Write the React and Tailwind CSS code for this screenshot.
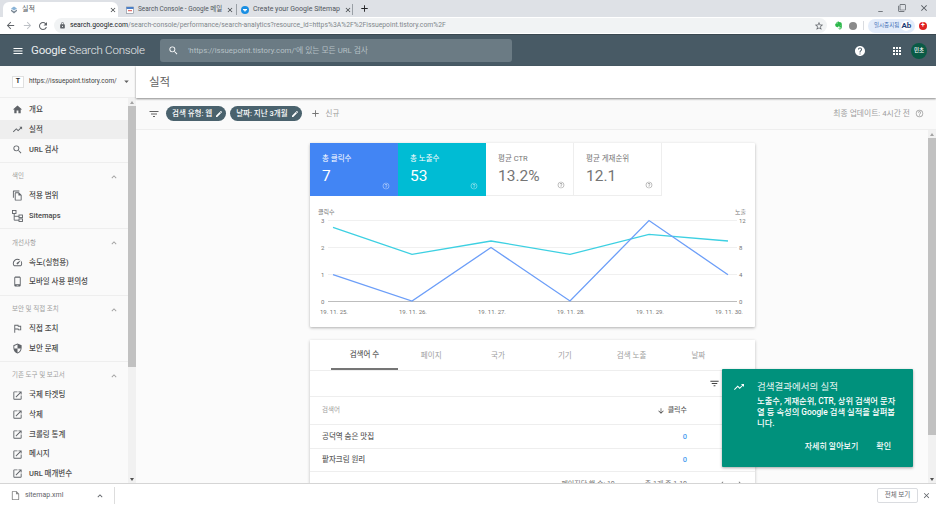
import {
  MdHome, MdTrendingUp, MdSearch, MdOutlineFileCopy, MdOutlineSpeed, MdOutlinePhoneAndroid,
  MdOutlineFlag, MdSecurity, MdOpenInNew, MdFilterList, MdEdit, MdAdd, MdHelpOutline, MdHelp,
  MdApps, MdMenu, MdArrowDownward, MdExpandLess, MdStarBorder, MdOutlineInsertDriveFile,
  MdClose, MdArrowBack, MdArrowForward, MdRefresh, MdLock, MdArrowDropDown,
  MdChevronLeft, MdChevronRight, MdMinimize, MdFilterNone,
} from 'react-icons/md';
import { FaEvernote } from 'react-icons/fa';

const font = { fontFamily: 'Roboto, "Noto Sans CJK KR", sans-serif' };

function SitemapIcon() {
  return (
    <svg width="11" height="12" viewBox="0 0 11 12" fill="none" stroke="#5f6368" strokeWidth="0.9">
      <rect x="0.5" y="0.5" width="3.5" height="3" />
      <rect x="7" y="5" width="3.5" height="2.6" />
      <rect x="7" y="8.9" width="3.5" height="2.6" />
      <path d="M2.2 3.5V10.2H7M2.2 6.3H7" />
    </svg>
  );
}

function ConsoleFavicon() {
  return (
    <svg className="shrink-0" width="8" height="8" viewBox="0 0 8 8">
      <path d="M1 2.5 4 0.5 7 2.5 4 4.5Z" fill="#8ab4d8" />
      <path d="M1 3.5 4 5.5 7 3.5V5L4 7.5 1 5Z" fill="#7a8794" />
    </svg>
  );
}

function MailFavicon() {
  return (
    <svg className="shrink-0" width="8" height="8" viewBox="0 0 8 8">
      <rect x="0.5" y="1" width="7" height="6.5" fill="#ffffff" stroke="#7a8794" strokeWidth="0.6" />
      <rect x="0.5" y="1" width="7" height="2" fill="#4a7fc9" />
      <rect x="2" y="4.2" width="4" height="1" fill="#d9534f" />
    </svg>
  );
}

function GlobeFavicon() {
  return (
    <svg className="shrink-0" width="8" height="8" viewBox="0 0 8 8">
      <circle cx="4" cy="4" r="4" fill="#1a8fe3" />
      <path d="M2 3h4v1.2H5L4 6 3 4.2H2Z" fill="#ffffff" />
    </svg>
  );
}

const sections = [
  {
    items: [
      { icon: <MdHome />, label: '개요' },
      { icon: <MdTrendingUp />, label: '실적', active: true },
      { icon: <MdSearch />, label: 'URL 검사' },
    ],
  },
  {
    title: '색인',
    items: [
      { icon: <MdOutlineFileCopy />, label: '적용 범위' },
      { icon: <SitemapIcon />, label: 'Sitemaps' },
    ],
  },
  {
    title: '개선사항',
    items: [
      { icon: <MdOutlineSpeed />, label: '속도(실험용)' },
      { icon: <MdOutlinePhoneAndroid />, label: '모바일 사용 편의성' },
    ],
  },
  {
    title: '보안 및 직접 조치',
    items: [
      { icon: <MdOutlineFlag />, label: '직접 조치' },
      { icon: <MdSecurity />, label: '보안 문제' },
    ],
  },
  {
    title: '기존 도구 및 보고서',
    items: [
      { icon: <MdOpenInNew />, label: '국제 타겟팅' },
      { icon: <MdOpenInNew />, label: '삭제' },
      { icon: <MdOpenInNew />, label: '크롤링 통계' },
      { icon: <MdOpenInNew />, label: '메시지' },
      { icon: <MdOpenInNew />, label: 'URL 매개변수' },
    ],
  },
];

const tiles = [
  { label: '총 클릭수', value: '7', tile: 'bg-[#4285f4] text-white', help: 'text-white/60' },
  { label: '총 노출수', value: '53', tile: 'bg-[#00bcd4] text-white', help: 'text-white/60' },
  { label: '평균 CTR', value: '13.2%', tile: 'bg-white text-[#757575] border-r border-b border-[#eeeeee]', help: 'text-[#9e9e9e]' },
  { label: '평균 게재순위', value: '12.1', tile: 'bg-white text-[#757575] border-r border-b border-[#eeeeee]', help: 'text-[#9e9e9e]' },
];

const tableTabs = ['검색어 수', '페이지', '국가', '기기', '검색 노출', '날짜'];
const rows = ['공덕역 숨은 맛집', '팥자크림 원리'];

function ScrollBar({ thumb }) {
  return (
    <div className="w-2 shrink-0 flex flex-col bg-[#f1f1f1]">
      <div className="h-2 flex items-center justify-center">
        <div className="border-x-[2px] border-b-[3px] border-x-transparent border-b-[#a3a3a3]" />
      </div>
      <div className={`${thumb} bg-[#c1c1c1]`} />
      <div className="flex-1" />
      <div className="h-2 flex items-center justify-center">
        <div className="border-x-[2px] border-t-[3px] border-x-transparent border-t-[#505050]" />
      </div>
    </div>
  );
}

function Sidebar() {
  return (
    <aside className="w-[136px] shrink-0 flex flex-col bg-[#fafafa] overflow-hidden">
      <div className="h-[32px] shrink-0 flex items-center pl-3 pr-[4px] border-b border-[#eeeeee] bg-[#fafafa]">
        <div className="w-3 h-3 bg-white border border-[#e0e0e0] flex items-center justify-center text-[7px] font-bold text-[#333]">
          T
        </div>
        <span className="ml-[5px] text-[6.5px] text-[#424242]">https://issuepoint.tistory.com/</span>
        <MdArrowDropDown className="ml-auto text-[11px] text-[#616161]" />
      </div>
      <div className="flex-1 flex min-h-0">
        <nav className="flex-1 min-w-0 pt-[2px]">
          {sections.map((section, i) => (
            <div key={i} className={i === 0 ? 'pb-[3px]' : 'border-t border-[#eeeeee] pt-[5px] pb-[3px]'}>
              {section.title && (
                <div className="h-[18px] flex items-center pl-3 pr-[9px] text-[6.5px] text-[#9e9e9e]">
                  <span>{section.title}</span>
                  <MdExpandLess className="ml-auto text-[10px] text-[#9e9e9e]" />
                </div>
              )}
              {section.items.map((item) => (
                <div
                  key={item.label}
                  className={`h-[19.7px] flex items-center pl-3 ${item.active ? 'bg-[#eeeeee]' : ''}`}
                >
                  <span className="w-[17px] text-[#5f6368] text-[11px] flex items-center">{item.icon}</span>
                  <span className="text-[7.5px] text-[#4a4a4a] font-medium">{item.label}</span>
                </div>
              ))}
            </div>
          ))}
        </nav>
        <ScrollBar thumb="h-[261px]" />
      </div>
    </aside>
  );
}

function Chip({ label }) {
  return (
    <div className="h-[15px] rounded-full bg-[#4a626d] text-white flex items-center pl-[6px] pr-[3px] gap-[3px]">
      <span className="text-[7.5px] font-medium whitespace-nowrap">{label}</span>
      <MdEdit className="text-[8px]" />
    </div>
  );
}

function PerformanceCard() {
  const blue = '333,274.7 412,301 491,247.5 570,301 649,220.5 728,274.7';
  const cyan = '333,227.3 412,254.3 491,241 570,254.3 649,234.3 728,241';
  return (
    <section className="w-[445px] h-[184px] bg-white rounded-[1px] shadow-[0_1px_3px_rgba(0,0,0,0.3)]">
      <div className="flex h-[53px]">
        {tiles.map((t) => (
          <div key={t.label} className={`relative w-[88px] pl-3 pt-[11px] ${t.tile}`}>
            <div className="text-[7.5px] leading-[9px]">{t.label}</div>
            <div className="text-[15.5px] leading-[20px] mt-[3px]">{t.value}</div>
            <MdHelpOutline className={`absolute right-[8px] bottom-[6px] text-[8px] ${t.help}`} />
          </div>
        ))}
      </div>
      <svg width="445" height="131" viewBox="310 196 445 131" style={font}>
        <g stroke="#f0f0f0" strokeWidth="1">
          <line x1="328" x2="737" y1="220.5" y2="220.5" />
          <line x1="328" x2="737" y1="247.5" y2="247.5" />
          <line x1="328" x2="737" y1="274.5" y2="274.5" />
        </g>
        <line x1="328" x2="737" y1="301.5" y2="301.5" stroke="#bdbdbd" />
        <polyline points={cyan} fill="none" stroke="#3dd0e2" strokeWidth="1.3" />
        <polyline points={blue} fill="none" stroke="#6c9ef8" strokeWidth="1.3" />
        <g fontSize="6" fill="#757575">
          <text x="318" y="214">클릭수</text>
          <text x="735" y="214">노출</text>
          {[['3', 222.5], ['2', 249.5], ['1', 276.5], ['0', 303.5]].map(([v, y]) => (
            <text key={v} x="321" y={y}>{v}</text>
          ))}
          {[['12', 222.5], ['8', 249.5], ['4', 276.5], ['0', 303.5]].map(([v, y]) => (
            <text key={v} x="739" y={y}>{v}</text>
          ))}
          {['19. 11. 25.', '19. 11. 26.', '19. 11. 27.', '19. 11. 28.', '19. 11. 29.', '19. 11. 30.'].map((d, i) => (
            <text key={d} x={320 + i * 79} y="314">{d}</text>
          ))}
        </g>
      </svg>
    </section>
  );
}

function TableCard() {
  return (
    <section className="w-[445px] bg-white mt-[13px] shadow-[0_1px_3px_rgba(0,0,0,0.25)]">
      <div className="h-[31px] pl-[21px] flex border-b border-[#eeeeee]">
        {tableTabs.map((tab, i) => (
          <div
            key={tab}
            className={`w-[66.8px] flex items-center justify-center pt-[1px] text-[7.5px] ${
              i === 0 ? 'border-b-[2px] border-[#757575] text-[#616161] font-medium' : 'text-[#9e9e9e]'
            }`}
          >
            {tab}
          </div>
        ))}
      </div>
      <div className="h-[26px] flex items-center justify-end pr-[35px] border-b border-[#eeeeee]">
        <MdFilterList className="text-[11px] text-[#424242]" />
      </div>
      <div className="h-[28px] flex items-center justify-between pl-3 pr-[68px] border-b border-[#eeeeee]">
        <span className="text-[6.5px] text-[#9e9e9e]">검색어</span>
        <span className="flex items-center gap-[3px] text-[7px] text-[#616161] font-medium">
          <MdArrowDownward className="text-[8px] text-[#424242]" />
          클릭수
        </span>
      </div>
      {rows.map((row) => (
        <div key={row} className="h-[23.5px] flex items-center justify-between pl-3 pr-[68px] border-b border-[#eeeeee]">
          <span className="text-[7.5px] text-[#5f5f5f] font-medium">{row}</span>
          <span className="text-[7.5px] text-[#4a9df0] font-medium">0</span>
        </div>
      ))}
      {/* pager row sits behind the download bar, only its top edge shows */}
      <div className="h-[24px] flex items-center justify-end pr-[10px] gap-[30px] text-[7px] text-[#757575]">
        <span>페이지당 행 수: 10</span>
        <span>총 1개 중 1-10</span>
        <span className="flex gap-[8px] text-[10px]">
          <MdChevronLeft />
          <MdChevronRight />
        </span>
      </div>
    </section>
  );
}

export default function App() {
  return (
    <div className="relative w-[936px] h-[507px] flex flex-col overflow-hidden bg-white" style={font}>
      {/* browser tabs */}
      <div className="h-[17px] shrink-0 bg-[#dee1e6] flex items-end pl-[3px]">
        <div className="w-[115px] h-[15px] flex items-center bg-white rounded-t-md pl-[7px] pr-[1px] gap-1 shrink-0">
          <ConsoleFavicon />
          <span className="flex-1 text-[7px] text-[#50565c]">실적</span>
          <MdClose className="text-[8px] text-[#3c4043] shrink-0" />
        </div>
        <div className="w-[119px] h-[11px] mb-[2px] flex items-center pl-2 pr-1 gap-1 border-r border-[#9aa0a6] shrink-0">
          <MailFavicon />
          <span className="flex-1 whitespace-nowrap text-[6.5px] text-[#50565c]">Search Console - Google 메일</span>
          <MdClose className="text-[8px] text-[#3c4043] shrink-0" />
        </div>
        <div className="w-[116px] h-[11px] mb-[2px] flex items-center pl-1 pr-[3px] gap-1 border-r border-[#9aa0a6] shrink-0">
          <GlobeFavicon />
          <span className="flex-1 whitespace-nowrap text-[7px] text-[#50565c]">Create your Google Sitemap</span>
          <MdClose className="text-[8px] text-[#3c4043] shrink-0" />
        </div>
        <MdAdd className="ml-[6px] mb-[3px] text-[11px] text-[#202124]" />
        <div className="ml-auto flex items-center gap-[13px] pr-[7px] self-start pt-[3px] text-[#50565c]">
          <MdMinimize className="text-[9px]" />
          <MdFilterNone className="text-[8px]" />
          <MdClose className="text-[10px]" />
        </div>
      </div>

      {/* browser toolbar */}
      <div className="h-[17px] shrink-0 bg-white flex items-center pl-[5px]">
        <MdArrowBack className="text-[11px] text-[#5f6368]" />
        <MdArrowForward className="ml-[6px] text-[11px] text-[#bdc1c6]" />
        <MdRefresh className="ml-[4px] text-[12px] text-[#5f6368]" />
        <div className="ml-[5px] w-[773px] h-[15px] rounded-full bg-[#f1f3f4] flex items-center pl-[5px] pr-[3px]">
          <MdLock className="text-[7px] text-[#5f6368]" />
          <span className="ml-[4px] text-[6.8px] whitespace-nowrap text-[#80868b]">
            <span className="text-[#202124]">search.google.com</span>
            /search-console/performance/search-analytics?resource_id=https%3A%2F%2Fissuepoint.tistory.com%2F
          </span>
          <MdStarBorder className="ml-auto text-[10px] text-[#5f6368]" />
        </div>
        <FaEvernote className="ml-[7px] text-[9px] text-[#2db84b]" />
        <div className="ml-[6px] w-[8px] h-[8px] rounded-full bg-[#8a8a8a]" />
        <div className="ml-[6px] w-px h-[9px] bg-[#dadce0]" />
        <div className="ml-[4px] w-[47px] h-[14px] rounded-full bg-[#e3ecfa] flex items-center pl-[6px] gap-[2px]">
          <span className="text-[5.5px] text-[#3f6fb5] whitespace-nowrap">일시중지됨</span>
          <span className="w-[10px] h-[10px] rounded-full bg-white text-[8px] font-bold text-[#1f3f78] leading-[10px] text-center">
            Ab
          </span>
        </div>
        <div className="ml-[4px] w-[8px] h-[8px] rounded-full bg-[#e02020] flex items-center justify-center text-[7px] leading-none text-white font-bold">
          +
        </div>
      </div>

      {/* search console header */}
      <header className="h-[32px] shrink-0 bg-[#485a65] border-t border-[#3a4850] flex items-center pl-3 pr-[9px] text-white">
        <MdMenu className="text-[12px]" />
        <div className="ml-[7px] w-[122px] text-[11.5px] leading-none whitespace-nowrap text-[#e8ecee] tracking-[-0.2px]">
          Google <span className="font-light">Search Console</span>
        </div>
        <div className="ml-[7px] w-[352px] h-[23px] rounded-[3px] bg-[#6b7b84] flex items-center pl-[8px]">
          <MdSearch className="text-[11px] text-white" />
          <span className="ml-[9px] text-[7.8px] text-[#b5c0c5]">'https://issuepoint.tistory.com/'에 있는 모든 URL 검사</span>
        </div>
        <MdHelp className="ml-auto text-[12px]" />
        <MdApps className="ml-[25px] text-[12px]" />
        <div className="ml-[8px] w-4 h-4 rounded-full bg-[#0a5a45] flex items-center justify-center text-[5.5px] font-medium">
          민초
        </div>
      </header>

      {/* body */}
      <div className="flex-1 min-h-0 flex">
        <Sidebar />
        <main className="flex-1 min-w-0 flex flex-col">
          <div className="h-[32px] shrink-0 flex items-center pl-[13px] pt-[2px] bg-white shadow-[0_1px_2px_rgba(0,0,0,0.45)] relative">
            <h1 className="text-[11.5px] text-[#616161]">실적</h1>
          </div>
          <div className="h-[32px] shrink-0 flex items-center pl-3 pr-[12px] border-b border-[#eeeeee] bg-[#fafafa]">
            <MdFilterList className="text-[12px] text-[#616161]" />
            <div className="ml-[6px] flex gap-[4px]">
              <Chip label="검색 유형: 웹" />
              <Chip label="날짜: 지난 3개월" />
            </div>
            <MdAdd className="ml-[8px] text-[11px] text-[#757575]" />
            <span className="ml-[5px] text-[7.5px] text-[#9e9e9e]">신규</span>
            <span className="ml-auto text-[7.8px] text-[#9e9e9e]">최종 업데이트: 4시간 전</span>
            <MdHelpOutline className="ml-[5px] text-[9px] text-[#9e9e9e]" />
          </div>
          <div className="flex-1 min-h-0 flex bg-[#fbfbfb]">
            <div className="flex-1 min-w-0 flex flex-col items-start pt-[13px] pl-[174px] overflow-hidden">
              <PerformanceCard />
              <TableCard />
            </div>
            <ScrollBar thumb="h-[297px]" />
          </div>
        </main>
      </div>

      {/* download bar */}
      <div className="h-[24px] shrink-0 bg-white border-t border-[#d5d5d5] flex items-center pl-[10px] pr-[5px]">
        <MdOutlineInsertDriveFile className="text-[11px] text-[#8a8a8a]" />
        <span className="ml-[4px] text-[7px] text-[#5f6368]">sitemap.xml</span>
        <MdExpandLess className="ml-[32px] text-[10px] text-[#5f6368]" />
        <div className="ml-[9px] w-px h-[17px] bg-[#dddddd]" />
        <div className="ml-auto w-[41px] h-[15px] border border-[#dadce0] rounded-[2px] flex items-center justify-center text-[6.5px] text-[#5f6368]">
          전체 보기
        </div>
        <MdClose className="ml-[4px] text-[9px] text-[#5f6368]" />
      </div>

      {/* onboarding toast */}
      <div className="absolute left-[722px] top-[369px] w-[191px] h-[98px] bg-[#00917c] text-white shadow-[0_1px_3px_rgba(0,0,0,0.35)] rounded-[1px] pl-[35px] pr-[15px] pt-[11px]">
        <MdTrendingUp className="absolute left-[11px] top-[12px] text-[12px]" />
        <div className="text-[9.5px] leading-[13px] text-[#e6f4f1]">검색결과에서의 실적</div>
        <p className="mt-[3px] text-[8.3px] leading-[10.8px] font-medium">
          노출수, 게재순위, CTR, 상위 검색어 문자열 등 속성의 Google 검색 실적을 살펴봅니다.
        </p>
        <div className="absolute right-[22px] bottom-[14px] flex gap-[18px] text-[8px] font-medium">
          <span>자세히 알아보기</span>
          <span>확인</span>
        </div>
      </div>
    </div>
  );
}
